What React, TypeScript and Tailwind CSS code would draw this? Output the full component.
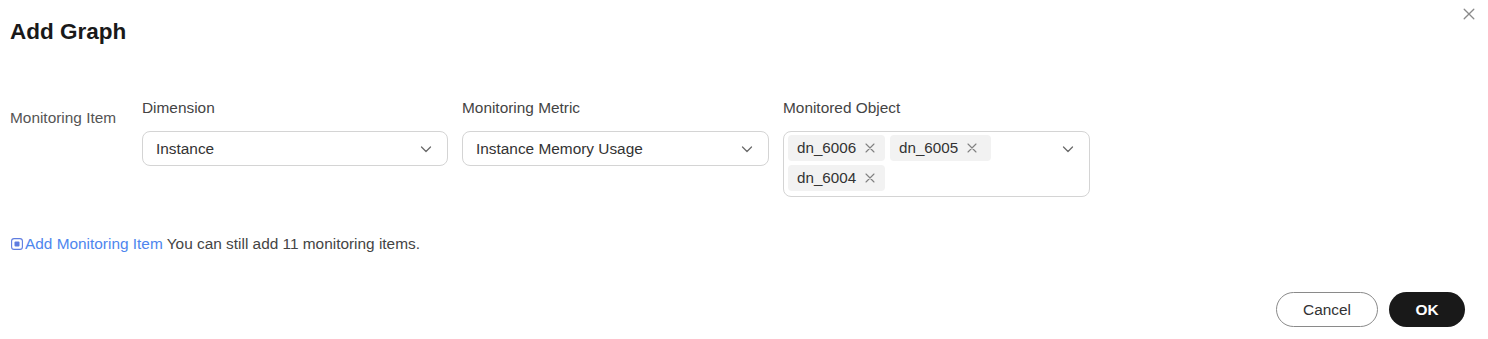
import React from "react";

const Chevron = () => (
  <svg width="14" height="14" viewBox="0 0 14 14" fill="none">
    <path d="M2.5 5 L7 9.5 L11.5 5" stroke="#6b6b6b" strokeWidth="1.3" strokeLinecap="round" strokeLinejoin="round" />
  </svg>
);

const SmallX = ({ size = 10, color = "#777" }: { size?: number; color?: string }) => (
  <svg width={size} height={size} viewBox="0 0 10 10" fill="none">
    <path d="M1 1 L9 9 M9 1 L1 9" stroke={color} strokeWidth="1.1" strokeLinecap="round" />
  </svg>
);

const Tag = ({ label, w }: { label: string; w: string }) => (
  <div className={`flex items-center h-[26px] ${w} pl-[9px] bg-[#f2f2f2] rounded-[4px] text-[15.2px] text-[#333]`}>
    <span>{label}</span>
    <span className="ml-[9px] flex items-center"><SmallX size={10} color="#808080" /></span>
  </div>
);

export default function App() {
  return (
    <div className="w-[1488px] h-[339px] bg-white relative text-[#252b3a]" style={{ fontFamily: '"Liberation Sans", Arial, sans-serif' }}>
      <button className="absolute right-[11px] top-[6px] p-[2px]">
        <SmallX size={12} color="#8a8a8a" />
      </button>
      <div className="pl-[10px] pt-[19px]">
        <h1 className="text-[22.5px] leading-[26px] font-bold text-[#191919]">Add Graph</h1>
      </div>
      <div className="flex pl-[10px] mt-[54px] text-[15.4px]">
        <div className="w-[132px] pt-[10px] text-[#555] leading-[18px]">Monitoring Item</div>
        <div className="flex gap-[14px]">
          <div className="flex flex-col w-[306px]">
            <div className="leading-[18px] text-[#444] mb-[14px]">Dimension</div>
            <div className="h-[35px] border border-[#d4d4d4] rounded-[8px] flex items-center justify-between pl-[13px] pr-[14px] text-[#333]">
              <span>Instance</span>
              <Chevron />
            </div>
          </div>
          <div className="flex flex-col w-[307px]">
            <div className="leading-[18px] text-[#444] mb-[14px]">Monitoring Metric</div>
            <div className="h-[35px] border border-[#d4d4d4] rounded-[8px] flex items-center justify-between pl-[13px] pr-[14px] text-[#333]">
              <span>Instance Memory Usage</span>
              <Chevron />
            </div>
          </div>
          <div className="flex flex-col w-[307px]">
            <div className="leading-[18px] text-[#444] mb-[14px]">Monitored Object</div>
            <div className="h-[66px] border border-[#d4d4d4] rounded-[8px] flex items-start justify-between pl-[4px] pr-[14px] pt-[3px]">
              <div className="flex flex-wrap gap-x-[5px] gap-y-[4px] w-[210px]">
                <Tag label="dn_6006" w="w-[97px]" />
                <Tag label="dn_6005" w="w-[101px]" />
                <Tag label="dn_6004" w="w-[97px]" />
              </div>
              <div className="pt-[7px]"><Chevron /></div>
            </div>
          </div>
        </div>
      </div>
      <div className="flex items-center pl-[11px] mt-[38px] text-[15.4px] leading-[18px]">
        <svg width="12" height="12" viewBox="0 0 12 12" fill="none" className="mr-[2px]">
          <rect x="0.6" y="0.6" width="10.8" height="10.8" rx="2.5" stroke="#5e7ce0" strokeWidth="1.1" />
          <rect x="3.5" y="3.5" width="5" height="5" rx="1" fill="#5e7ce0" />
        </svg>
        <span className="text-[#4e86ee]">Add Monitoring Item</span>
        <span className="ml-[4px] text-[#444]">You can still add 11 monitoring items.</span>
      </div>
      <div className="absolute right-[23px] top-[292px] flex gap-[11px]">
        <button className="w-[102px] h-[35px] rounded-full border border-[#8a8a8a] text-[15.4px] text-[#333] bg-white">Cancel</button>
        <button className="w-[76px] h-[35px] rounded-full bg-[#191919] text-white text-[15.4px] font-bold">OK</button>
      </div>
    </div>
  );
}
